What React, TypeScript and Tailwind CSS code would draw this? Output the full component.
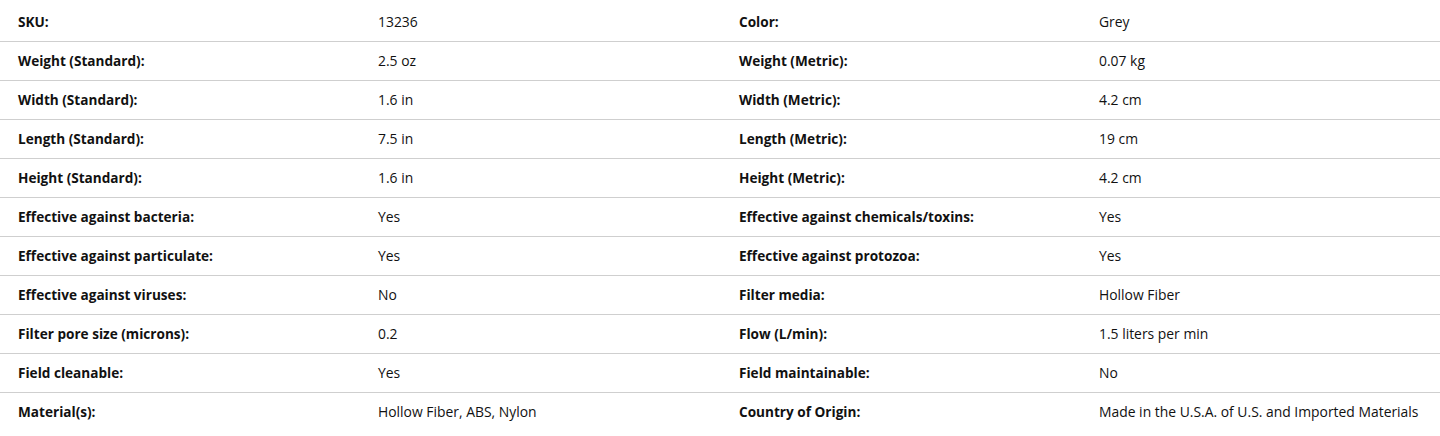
const rows: [string, string, string, string][] = [
	["SKU:", "13236", "Color:", "Grey"],
	["Weight (Standard):", "2.5 oz", "Weight (Metric):", "0.07 kg"],
	["Width (Standard):", "1.6 in", "Width (Metric):", "4.2 cm"],
	["Length (Standard):", "7.5 in", "Length (Metric):", "19 cm"],
	["Height (Standard):", "1.6 in", "Height (Metric):", "4.2 cm"],
	["Effective against bacteria:", "Yes", "Effective against chemicals/toxins:", "Yes"],
	["Effective against particulate:", "Yes", "Effective against protozoa:", "Yes"],
	["Effective against viruses:", "No", "Filter media:", "Hollow Fiber"],
	["Filter pore size (microns):", "0.2", "Flow (L/min):", "1.5 liters per min"],
	["Field cleanable:", "Yes", "Field maintainable:", "No"],
	["Material(s):", "Hollow Fiber, ABS, Nylon", "Country of Origin:", "Made in the U.S.A. of U.S. and Imported Materials"],
];

const App: React.FC = () => {
	return (
		<div className="w-[1440px] bg-white pt-[3px] text-[#111] font-['Open_Sans',sans-serif]">
			{rows.map((r, i) => (
				<div
					key={i}
					className={`grid grid-cols-4 h-[39px] items-center ${i < rows.length - 1 ? "border-b border-[#cfcfcf]" : ""}`}
				>
					<div className="pl-[18px] text-[13.6px] font-bold">{r[0]}</div>
					<div className="pl-[18px] text-[13.9px]">{r[1]}</div>
					<div className="pl-[19px] text-[13.6px] font-bold">{r[2]}</div>
					<div className="pl-[19px] text-[13.9px]">{r[3]}</div>
				</div>
			))}
		</div>
	);
};

export default App;
